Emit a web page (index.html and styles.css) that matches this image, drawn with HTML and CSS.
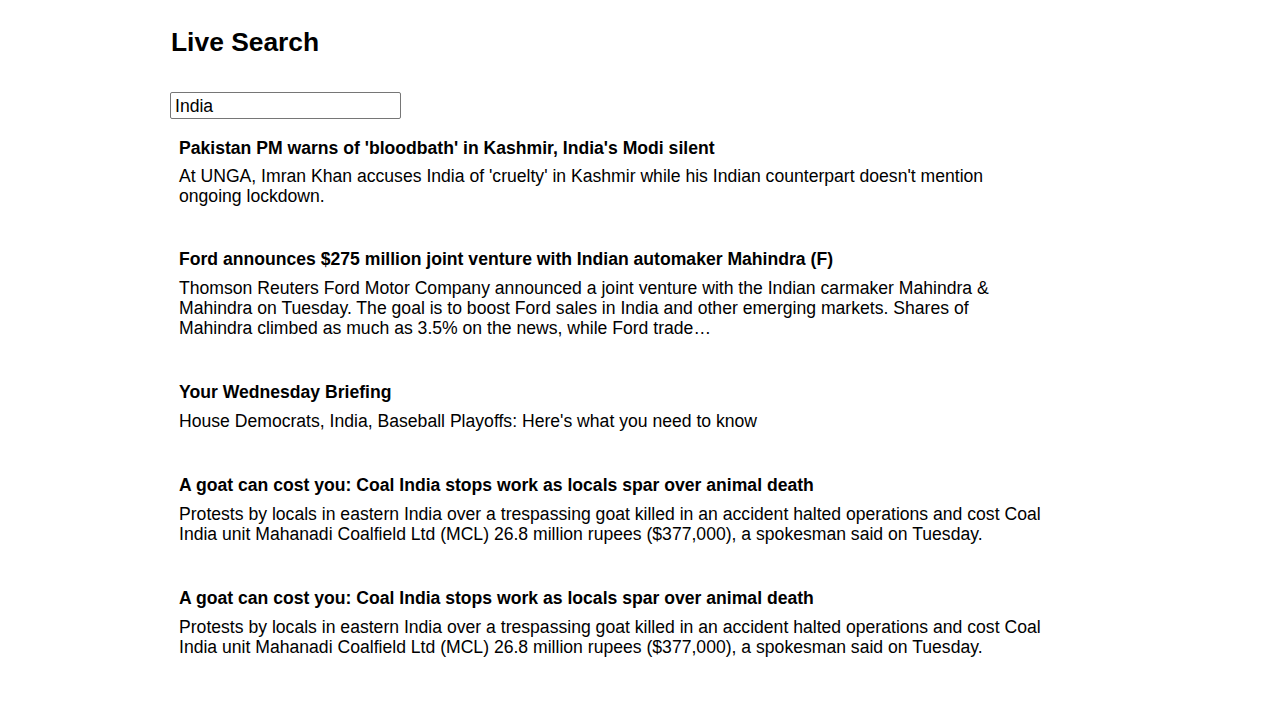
FILE: index.html
```html
<!DOCTYPE html>
<html lang="en">
<head>
<meta charset="utf-8">
<title>Live Search</title>
<link rel="stylesheet" href="styles.css">
</head>
<body>
<main class="page">
  <h2 class="title">Live Search</h2>
  <input class="search" type="text" value="India">
  <ul class="results">
    <li class="result">
      <h4 class="result-title">Pakistan PM warns of 'bloodbath' in Kashmir, India's Modi silent</h4>
      <p class="result-desc">At UNGA, Imran Khan accuses India of 'cruelty' in Kashmir while his Indian counterpart doesn't mention ongoing lockdown.</p>
    </li>
    <li class="result">
      <h4 class="result-title">Ford announces $275 million joint venture with Indian automaker Mahindra (F)</h4>
      <p class="result-desc">Thomson Reuters Ford Motor Company announced a joint venture with the Indian carmaker Mahindra &amp; Mahindra on Tuesday. The goal is to boost Ford sales in India and other emerging markets. Shares of Mahindra climbed as much as 3.5% on the news, while Ford trade…</p>
    </li>
    <li class="result">
      <h4 class="result-title">Your Wednesday Briefing</h4>
      <p class="result-desc">House Democrats, India, Baseball Playoffs: Here's what you need to know</p>
    </li>
    <li class="result">
      <h4 class="result-title">A goat can cost you: Coal India stops work as locals spar over animal death</h4>
      <p class="result-desc">Protests by locals in eastern India over a trespassing goat killed in an accident halted operations and cost Coal India unit Mahanadi Coalfield Ltd (MCL) 26.8 million rupees ($377,000), a spokesman said on Tuesday.</p>
    </li>
    <li class="result">
      <h4 class="result-title">A goat can cost you: Coal India stops work as locals spar over animal death</h4>
      <p class="result-desc">Protests by locals in eastern India over a trespassing goat killed in an accident halted operations and cost Coal India unit Mahanadi Coalfield Ltd (MCL) 26.8 million rupees ($377,000), a spokesman said on Tuesday.</p>
    </li>
  </ul>
</main>
</body>
</html>
```
FILE: styles.css
```css
html, body {
  margin: 0;
  padding: 0;
  background: #ffffff;
}

body {
  font-family: "Liberation Sans", Arial, sans-serif;
  font-size: 17.6px;
  color: #000000;
}

.page {
  width: 938px;
  margin: 0 auto;
  padding-top: 27px;
  display: flex;
  flex-direction: column;
  align-items: flex-start;
}

.title {
  font-size: 26.4px;
  font-weight: bold;
  margin: 0 0 35px 1px;
  line-height: 30px;
}

.search {
  box-sizing: border-box;
  width: 231px;
  height: 27px;
  margin: 0;
  padding: 2px 4px 0 4px;
  border: 1px solid #767676;
  border-radius: 2px;
  font-family: "Liberation Sans", Arial, sans-serif;
  font-size: 17.6px;
  color: #000000;
  background: #ffffff;
}

.results {
  list-style: none;
  margin: 19px 0 0 0;
  padding: 0;
  width: 884px;
}

.result {
  padding: 0 9px;
  margin-bottom: 44px;
}

.result:first-child {
  margin-bottom: 43px;
}

.result-title {
  font-size: 17.6px;
  font-weight: bold;
  margin: 0 0 9px 0;
  line-height: 20px;
}

.result:first-child .result-title {
  margin-bottom: 8px;
}

.result-desc {
  margin: 0;
  line-height: 20px;
}
```
